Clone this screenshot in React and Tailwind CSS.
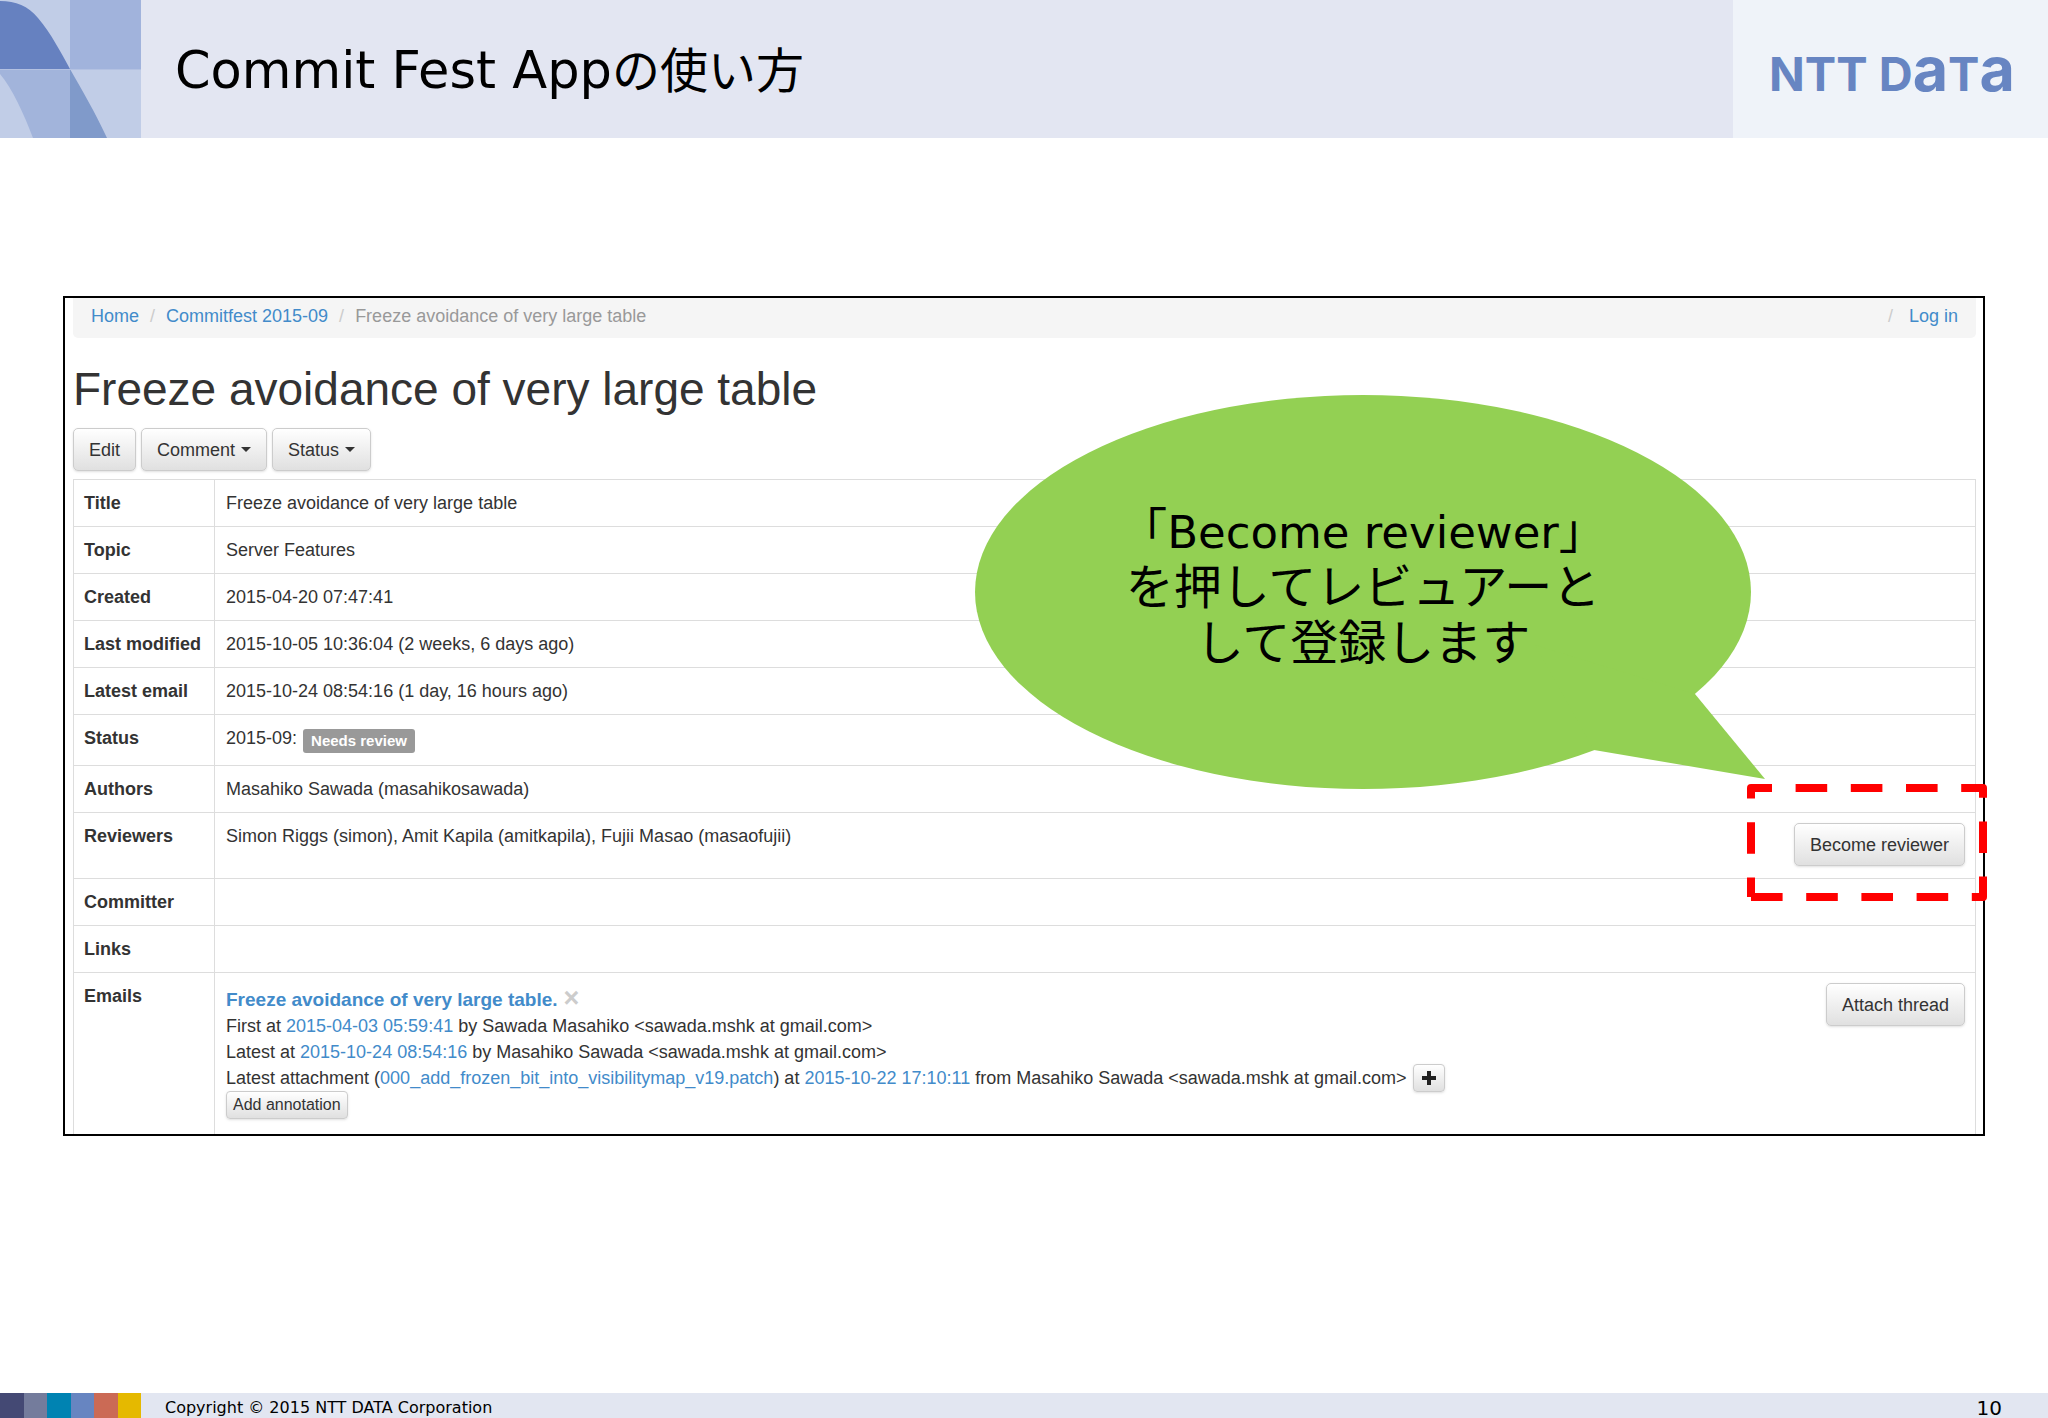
import React from 'react'

// Detail rows shown above the emails section
const PATCH_ROWS = [
  { label: 'Title', value: 'Freeze avoidance of very large table' },
  { label: 'Topic', value: 'Server Features' },
  { label: 'Created', value: '2015-04-20 07:47:41' },
  { label: 'Last modified', value: '2015-10-05 10:36:04 (2 weeks, 6 days ago)' },
  { label: 'Latest email', value: '2015-10-24 08:54:16 (1 day, 16 hours ago)' },
  { label: 'Status', value: '2015-09:', badge: 'Needs review' },
  { label: 'Authors', value: 'Masahiko Sawada (masahikosawada)' },
  {
    label: 'Reviewers',
    value: 'Simon Riggs (simon), Amit Kapila (amitkapila), Fujii Masao (masaofujii)',
    action: 'Become reviewer'
  },
  { label: 'Committer', value: '' },
  { label: 'Links', value: '' }
]

const SWATCHES = [
  'bg-[#444974]',
  'bg-[#747c9c]',
  'bg-[#0083b2]',
  'bg-[#6785c1]',
  'bg-[#cb6a55]',
  'bg-[#e5b900]'
]

function CornerMark() {
  return (
    <svg className="h-[138px] w-[141px] shrink-0" viewBox="0 0 141 138" aria-hidden="true">
      <rect width="141" height="138" fill="#c1cde7" />
      <rect x="70" width="71" height="69" fill="#a1b3dc" />
      <path d="M0 1C16 1 28 6 38 18C52 35 60 51 70 69H0Z" fill="#6681c0" />
      <path d="M0 69H70V138H33C24 114 12 88 0 74Z" fill="#a2b4db" />
      <path d="M70 69C82 90 95 112 107 138H70Z" fill="#809aca" />
      <path d="M0 69.500H141" stroke="#b3c1e2" strokeWidth="1" />
    </svg>
  )
}

function BrandLogo() {
  return (
    <div
      className="flex h-[138px] w-[315px] shrink-0 items-center bg-[#eff3f9] pl-9"
      aria-label="NTT DATA"
    >
      <span className="whitespace-nowrap pt-1 font-['Inter'] text-[47px] leading-[60px] font-bold text-[#6785c2]">
        NTT D<span className="text-[61px]">a</span>T<span className="text-[61px]">a</span>
      </span>
    </div>
  )
}

function Button({ children, small = false }) {
  return (
    <button
      type="button"
      className={`inline-flex items-center justify-center border border-[#cccccc] bg-linear-to-b from-white to-[#e0e0e0] text-[#333333] shadow-sm ${
        small ? 'h-7 rounded-sm px-[6px] text-[16px]' : 'h-[43px] rounded-[5px] px-[15px] text-[18px]'
      }`}
    >
      {children}
    </button>
  )
}

function Caret() {
  return (
    <svg className="ml-[6px] h-[5px] w-[10px]" viewBox="0 0 10 5" aria-hidden="true">
      <path d="M0 0H10L5 5Z" fill="#333333" />
    </svg>
  )
}

function Link({ children }) {
  return (
    <a href="#" className="text-[#428bca]">
      {children}
    </a>
  )
}

function Breadcrumb() {
  return (
    <nav className="flex rounded-b-[5px] bg-[#f5f5f5] px-[18px] pt-[5px] pb-[9px]">
      <Link>Home</Link>
      <span className="px-[11px] text-[#cccccc]">/</span>
      <Link>Commitfest 2015-09</Link>
      <span className="px-[11px] text-[#cccccc]">/</span>
      <span className="text-[#999999]">Freeze avoidance of very large table</span>
      <span className="ml-auto pr-4 text-[#cccccc]">/</span>
      <Link>Log in</Link>
    </nav>
  )
}

function PatchTable() {
  return (
    <table className="w-full border-collapse">
      <tbody>
        {PATCH_ROWS.map((row) => (
          <tr key={row.label} className="border border-[#dddddd] align-top">
            <th className="w-[141px] border-r border-[#dddddd] py-[10px] pl-[10px] text-left whitespace-nowrap">
              {row.label}
            </th>
            <td className="py-[10px] pr-[10px] pl-[11px]">
              <div className="flex items-start">
                <span>{row.value}</span>
                {row.badge && (
                  <span className="mt-1 mb-[2px] ml-[6px] rounded-[3px] bg-[#999999] px-2 text-[15px] leading-6 font-bold text-white">
                    {row.badge}
                  </span>
                )}
                {row.action && (
                  <span className="ml-auto flex pb-[2px]">
                    <Button>{row.action}</Button>
                  </span>
                )}
              </div>
            </td>
          </tr>
        ))}
        <tr className="border-x border-[#dddddd] align-top">
          <th className="border-r border-[#dddddd] py-[10px] pl-[10px] text-left">Emails</th>
          <td className="pt-[10px] pr-[10px] pb-[15px] pl-[11px]">
            <div className="flex items-start justify-between">
              <EmailThread />
              <Button>Attach thread</Button>
            </div>
          </td>
        </tr>
      </tbody>
    </table>
  )
}

function EmailThread() {
  return (
    <div className="pt-1">
      <div className="flex items-center text-[19px] font-bold">
        <Link>Freeze avoidance of very large table.</Link>
        <button type="button" aria-label="Remove thread" className="ml-[6px] pb-1 text-[27px] leading-[22px] font-bold text-[#cccccc]">
          ×
        </button>
      </div>
      <div>
        First at <Link>2015-04-03 05:59:41</Link> by Sawada Masahiko &lt;sawada.mshk at gmail.com&gt;
      </div>
      <div>
        Latest at <Link>2015-10-24 08:54:16</Link> by Masahiko Sawada &lt;sawada.mshk at gmail.com&gt;
      </div>
      <div className="flex h-[26px] items-center gap-[7px]">
        <span>
          Latest attachment (<Link>000_add_frozen_bit_into_visibilitymap_v19.patch</Link>) at{' '}
          <Link>2015-10-22 17:10:11</Link> from Masahiko Sawada &lt;sawada.mshk at gmail.com&gt;
        </span>
        <Button small>
          <svg className="h-[18px] w-[18px]" viewBox="0 0 18 18" aria-label="Show more">
            <path d="M9 2V16M2 9H16" stroke="#222222" strokeWidth="4" />
          </svg>
        </Button>
      </div>
      <div className="flex">
        <Button small>Add annotation</Button>
      </div>
    </div>
  )
}

// Speech bubble pointing at the reviewer button
function Callout() {
  return (
    <div className="absolute top-[99px] right-[220px] h-[394px] w-[790px]">
      <svg className="absolute inset-0 h-full w-full" viewBox="0 0 790 394" aria-hidden="true">
        <ellipse cx="388" cy="197" rx="388" ry="197" fill="#93d053" />
        <path d="M720 299L790 384L619 355L560 250Z" fill="#93d053" />
      </svg>
      <p className="relative w-[776px] pt-[104px] text-center font-['Noto_Sans_CJK_JP',sans-serif] text-[48px] leading-[56px] text-black">
        「<span className="font-['DejaVu_Sans'] text-[45px] leading-none">Become reviewer</span>」
        <br />
        を押してレビュアーと
        <br />
        して登録します
      </p>
    </div>
  )
}

function Highlight() {
  return (
    <svg
      className="absolute top-[488px] -right-[2px] h-[117px] w-[240px]"
      viewBox="0 0 240 117"
      aria-hidden="true"
    >
      <path
        d="M4 113H236V4H4V113"
        fill="none"
        stroke="#ff0000"
        strokeWidth="8"
        strokeLinejoin="round"
        strokeDasharray="31.6 23.6"
      />
    </svg>
  )
}

function App() {
  return (
    <div className="flex min-h-screen flex-col bg-white">
      <header className="flex items-center bg-[#e3e6f2]">
        <CornerMark />
        <h1 className="flex-1 pt-1 pl-[34px] font-['DejaVu_Sans','Noto_Sans_CJK_JP',sans-serif] text-[51px] leading-[72px] text-black">
          Commit Fest App<span className="text-[48px]">の使い方</span>
        </h1>
        <BrandLogo />
      </header>

      <main className="relative mx-[63px] mt-[158px]">
        <section className="border-2 border-black pr-[7px] pl-2 font-['Liberation_Sans',Arial,sans-serif] text-[18px] leading-[26px] text-[#333333]">
          <Breadcrumb />
          <h2 className="mt-[26px] text-[46px] leading-[50px]">Freeze avoidance of very large table</h2>
          <div className="mt-[14px] mb-2 flex gap-[5px]">
            <Button>Edit</Button>
            <Button>
              Comment <Caret />
            </Button>
            <Button>
              Status <Caret />
            </Button>
          </div>
          <PatchTable />
        </section>
        <Callout />
        <Highlight />
      </main>

      <footer className="mt-auto flex h-[25px] items-center bg-[#e2e6f1] font-['DejaVu_Sans',sans-serif] text-black">
        <div className="flex h-full w-[141px]">
          {SWATCHES.map((color) => (
            <span key={color} className={`flex-1 ${color}`} />
          ))}
        </div>
        <span className="pt-1 pl-6 text-[16px] leading-5">Copyright © 2015 NTT DATA Corporation</span>
        <span className="ml-auto pt-1 pr-[46px] text-[20px] leading-5">10</span>
      </footer>
    </div>
  )
}

export default App
